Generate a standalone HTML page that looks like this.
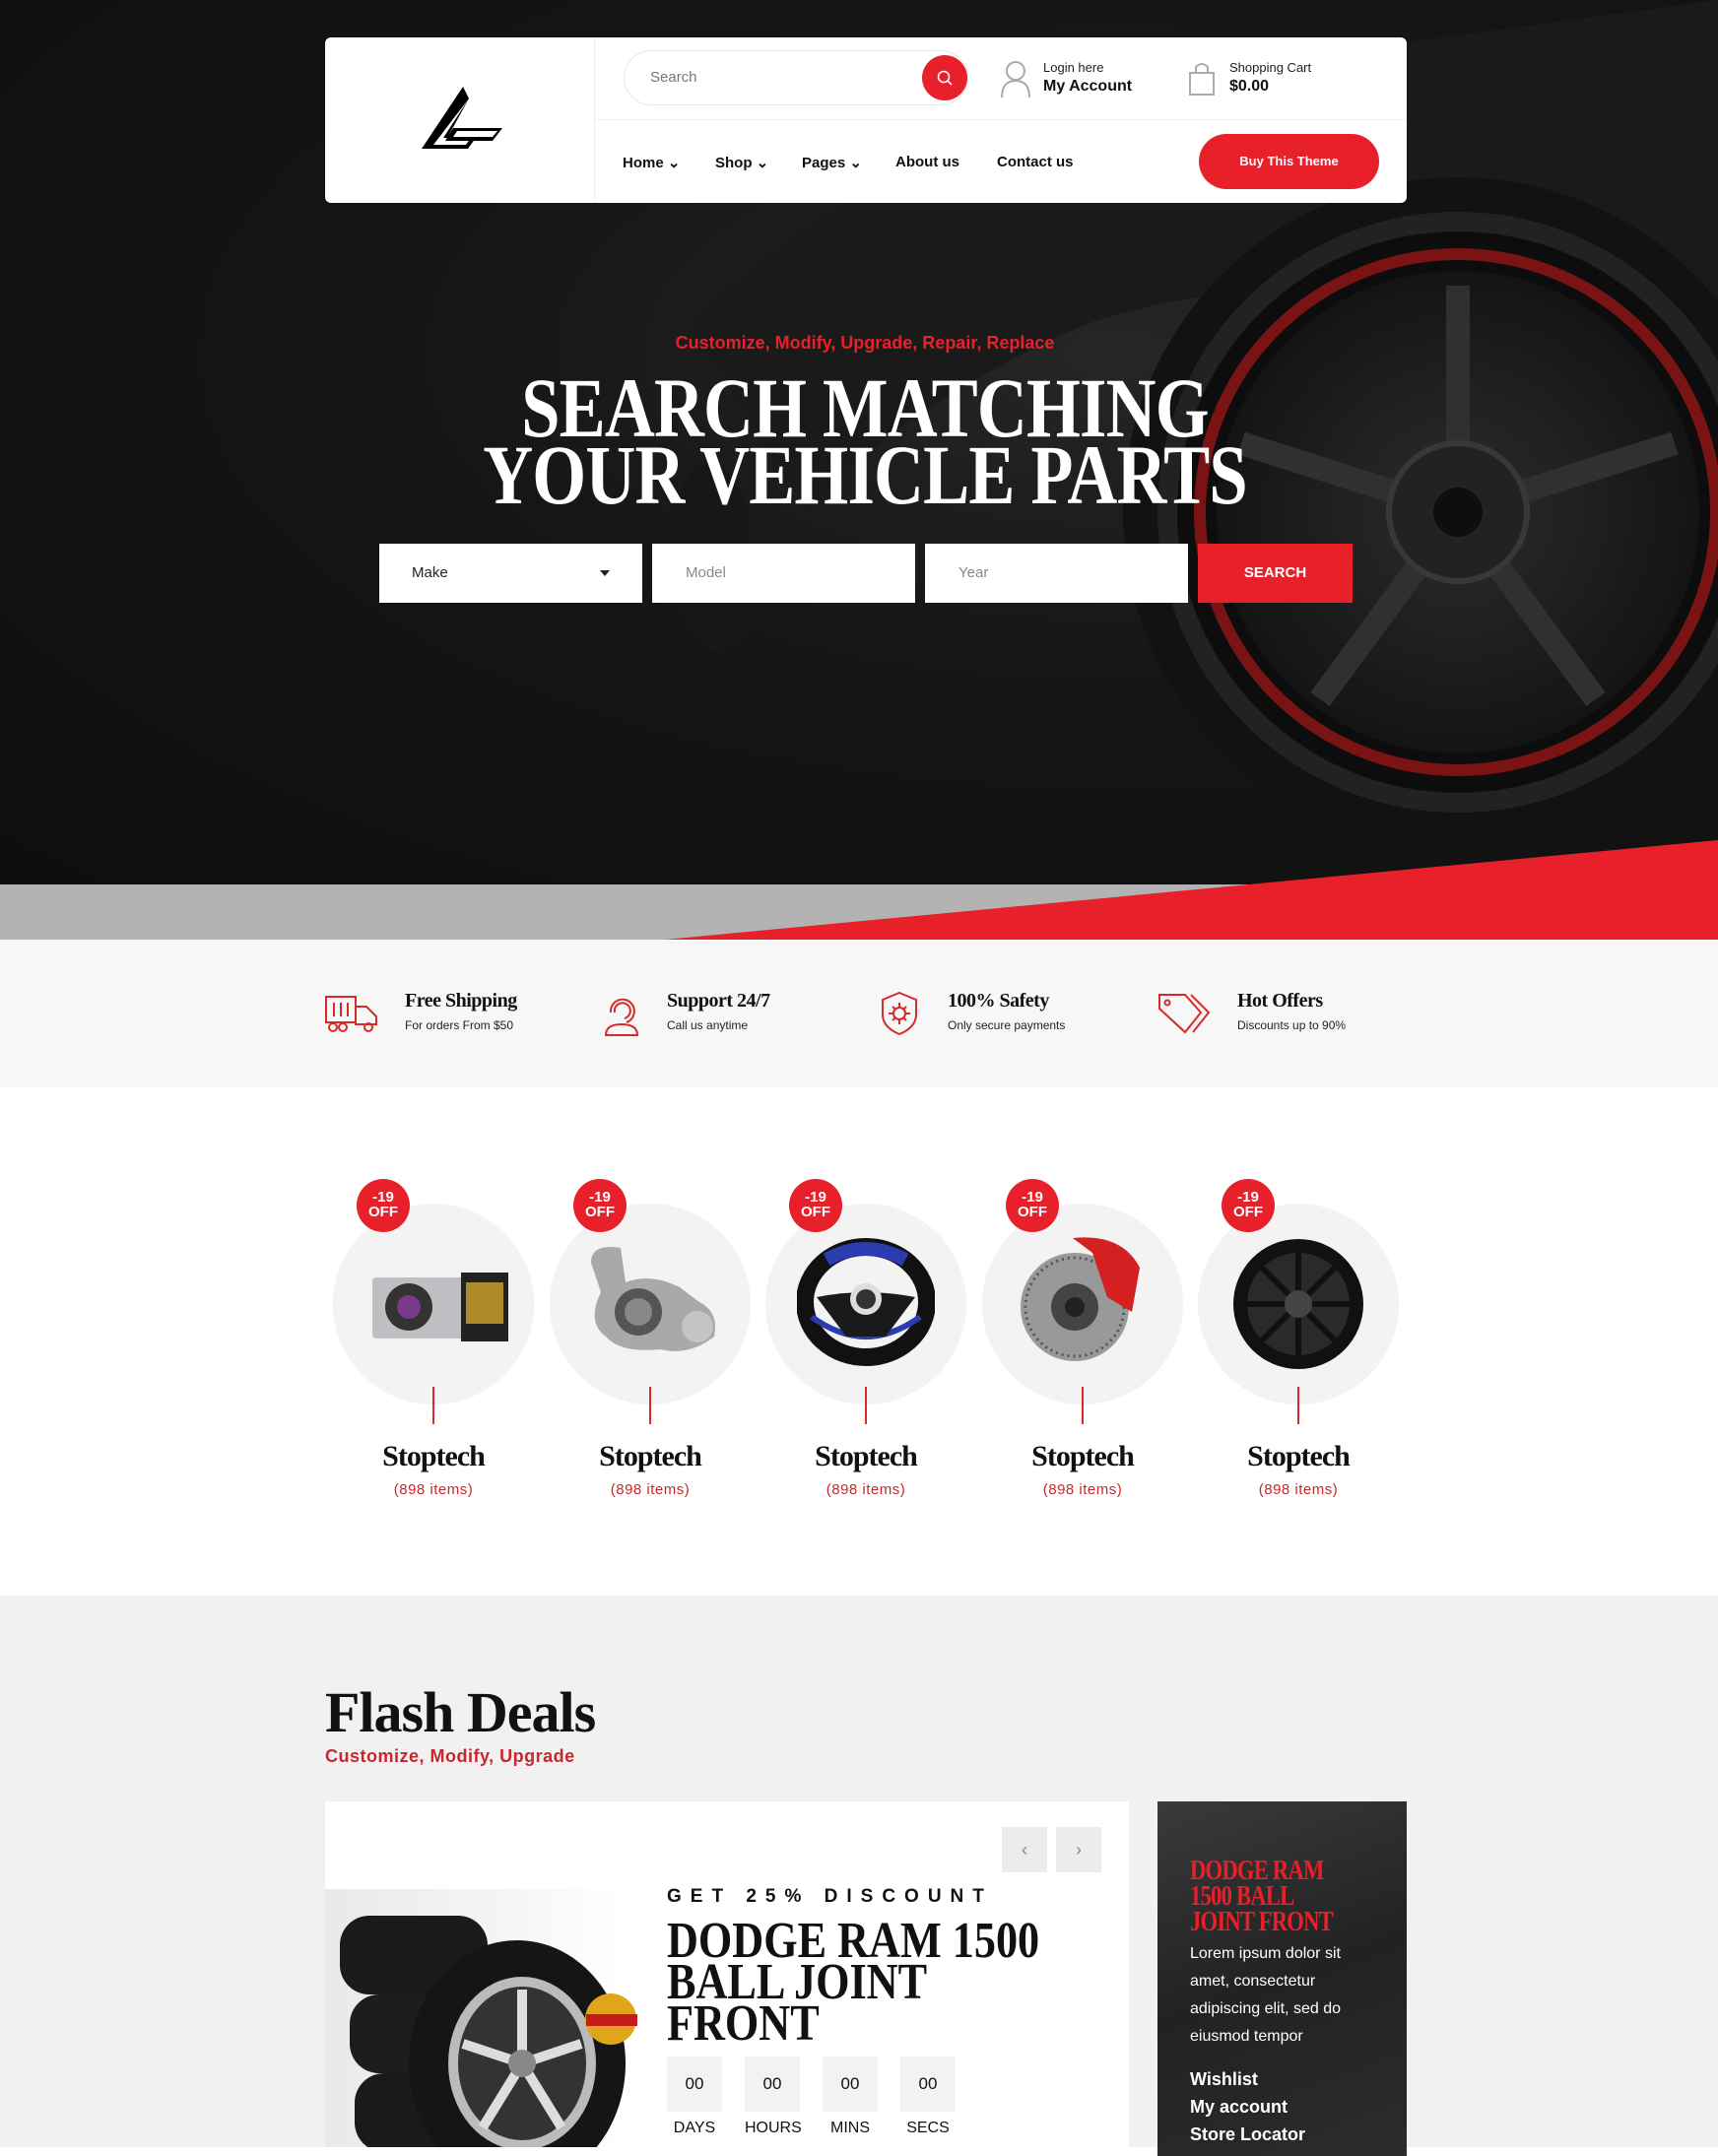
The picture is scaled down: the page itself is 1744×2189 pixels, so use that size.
<!DOCTYPE html>
<html><head><meta charset="utf-8">
<style>
*{margin:0;padding:0;box-sizing:border-box}
body{width:1744px;height:2180px;overflow:hidden;background:#fff;font-family:"Liberation Sans",sans-serif;position:relative}
.abs{position:absolute}
.serif{font-family:"Liberation Serif",serif;font-weight:bold}
#hero{left:0;top:0;width:1744px;height:898px;background:radial-gradient(ellipse at 65% 40%,#262626 0%,#151515 45%,#0e0e0e 100%);overflow:hidden}
.hdr{left:330px;top:38px;width:1098px;height:168px;background:#fff;border-radius:6px}
.nav a{position:absolute;top:118px;font-size:15px;font-weight:bold;color:#111}
.feat h4{font-family:"Liberation Serif",serif;font-weight:bold;font-size:20px;color:#111;letter-spacing:-0.5px}
.feat p{font-size:12px;color:#222;margin-top:6px}
.cat{position:absolute;top:1222px;width:210px;height:300px;text-align:center}
.circ{position:absolute;left:3px;top:0;width:204px;height:204px;border-radius:50%;background:#f3f3f3}
.badge{position:absolute;left:27px;top:-25px;width:54px;height:54px;border-radius:50%;background:#e8202a;color:#fff;font-size:15px;font-weight:bold;line-height:15px;padding-top:11px;text-align:center}
.cat .ln{position:absolute;left:104px;top:186px;width:2px;height:38px;background:#d62b2b}
.cat h3{position:absolute;left:0;top:240px;width:100%;font-family:"Liberation Serif",serif;font-weight:bold;font-size:30px;color:#111;letter-spacing:-1px}
.cat span{position:absolute;left:0;top:282px;width:100%;font-size:15px;color:#c8282d;letter-spacing:0.5px}
.cd{position:absolute;top:2088px;width:56px;height:56px;background:#f2f2f2;font-size:17px;text-align:center;line-height:56px;color:#111}
.cdl{position:absolute;top:2152px;width:56px;text-align:center;font-size:16px;color:#111}
</style></head><body>

<div id="hero" class="abs">
  <svg class="abs" style="left:0;top:0" width="1744" height="898">
    <defs><radialGradient id="g1" cx="50%" cy="50%" r="50%"><stop offset="0" stop-color="#2c2c2c"/><stop offset="1" stop-color="#141414"/></radialGradient></defs>
    <path d="M700 330 Q900 120 1300 60 L1744 0 L1744 300 Q1300 260 1100 330 Q900 420 820 520 Z" fill="#1a1a1a"/>
    <circle cx="1480" cy="520" r="340" fill="#121212"/>
    <circle cx="1480" cy="520" r="295" fill="#0d0d0d" stroke="#222" stroke-width="20"/>
    <circle cx="1480" cy="520" r="262" fill="none" stroke="#7a1414" stroke-width="12"/>
    <circle cx="1480" cy="520" r="245" fill="url(#g1)"/>
    <g stroke="#303030" stroke-width="24" fill="none">
      <line x1="1480" y1="520" x2="1480" y2="290"/>
      <line x1="1480" y1="520" x2="1700" y2="450"/>
      <line x1="1480" y1="520" x2="1620" y2="710"/>
      <line x1="1480" y1="520" x2="1340" y2="710"/>
      <line x1="1480" y1="520" x2="1260" y2="450"/>
    </g>
    <circle cx="1480" cy="520" r="70" fill="#222" stroke="#383838" stroke-width="6"/>
    <circle cx="1480" cy="520" r="25" fill="#0e0e0e"/>
    <path d="M680 520 Q720 420 760 520 L760 640 Q720 690 690 620 Z" fill="#171717"/>
  </svg>
</div>

<div class="abs hdr">
  <div class="abs" style="left:273px;top:0;width:1px;height:168px;background:#eee"></div>
  <div class="abs" style="left:274px;top:83px;width:824px;height:1px;background:#eee"></div>
  <svg class="abs" style="left:90px;top:50px" width="100" height="70" viewBox="0 0 100 70">
    <polygon points="50,0 8,63 55,63 63,52 34,52 56,12" fill="#000"/>
    <polygon points="56,12 30,52 58,52 53,59 20,59" fill="#fff"/>
    <polygon points="40,42 90,42 80,55 32,55" fill="#000"/>
    <polygon points="44,45 85,45 80,51 40,51" fill="#fff"/>
  </svg>
  <div class="abs" style="left:303px;top:13px;width:350px;height:56px;border:1px solid #e6e6e6;border-radius:28px"></div>
  <div class="abs" style="left:330px;top:32px;font-size:15px;color:#777">Search</div>
  <div class="abs" style="left:606px;top:18px;width:46px;height:46px;border-radius:50%;background:#e8202a"></div>
  <svg class="abs" style="left:620px;top:32px" width="18" height="18"><circle cx="8" cy="8" r="5.5" stroke="#fff" stroke-width="1.6" fill="none"/><line x1="12" y1="12" x2="16" y2="16" stroke="#fff" stroke-width="1.6"/></svg>
  <svg class="abs" style="left:685px;top:22px" width="32" height="40"><circle cx="16" cy="12" r="9" stroke="#aaa" stroke-width="2" fill="none"/><path d="M2 39 Q2 22 16 22 Q30 22 30 39" stroke="#aaa" stroke-width="2" fill="none"/></svg>
  <div class="abs" style="left:729px;top:23px;font-size:13px;color:#222">Login here</div>
  <div class="abs" style="left:729px;top:41px;font-size:16px;font-weight:bold;color:#111">My Account</div>
  <svg class="abs" style="left:876px;top:24px" width="30" height="36"><path d="M2 12 H26 V34 H2 Z" stroke="#aaa" stroke-width="2" fill="none"/><path d="M8 12 V6 Q14 0 20 6 V12" stroke="#aaa" stroke-width="2" fill="none"/></svg>
  <div class="abs" style="left:918px;top:23px;font-size:13px;color:#222">Shopping Cart</div>
  <div class="abs" style="left:918px;top:41px;font-size:16px;font-weight:bold;color:#111">$0.00</div>
  <div class="nav">
    <a style="left:302px">Home ⌄</a><a style="left:396px">Shop ⌄</a><a style="left:484px">Pages ⌄</a><a style="left:579px">About us</a><a style="left:682px">Contact us</a>
  </div>
  <div class="abs" style="left:887px;top:98px;width:183px;height:56px;border-radius:28px;background:#e8202a;color:#fff;font-size:13px;font-weight:bold;text-align:center;line-height:56px">Buy This Theme</div>
</div>

<div class="abs" style="left:0;top:338px;width:1756px;text-align:center;color:#e8202a;font-size:18px;font-weight:bold">Customize, Modify, Upgrade, Repair, Replace</div>
<div class="abs serif" style="left:0;top:380px;width:1756px;text-align:center;color:#fff;font-size:86px;line-height:68px;transform:scaleX(0.82);transform-origin:878px 0;letter-spacing:-1px">SEARCH MATCHING<br>YOUR VEHICLE PARTS</div>
<div class="abs" style="left:385px;top:552px;width:267px;height:60px;background:#fff"></div>
<div class="abs" style="left:418px;top:573px;font-size:15px;color:#222">Make</div>
<div class="abs" style="left:609px;top:579px;border:5px solid transparent;border-top:6px solid #222"></div>
<div class="abs" style="left:662px;top:552px;width:267px;height:60px;background:#fff"></div>
<div class="abs" style="left:696px;top:573px;font-size:15px;color:#888">Model</div>
<div class="abs" style="left:939px;top:552px;width:267px;height:60px;background:#fff"></div>
<div class="abs" style="left:973px;top:573px;font-size:15px;color:#888">Year</div>
<div class="abs" style="left:1216px;top:552px;width:157px;height:60px;background:#e8202a;color:#fff;font-size:15px;font-weight:bold;text-align:center;line-height:60px">SEARCH</div>

<div class="abs" style="left:0;top:898px;width:1744px;height:56px;background:#b3b3b3"></div>
<svg class="abs" style="left:0;top:850px" width="1744" height="105"><polygon points="675,104 1744,3 1744,104" fill="#e8202a"/></svg>

<div class="abs" style="left:0;top:954px;width:1744px;height:150px;background:#f7f7f7"></div>
<svg class="abs" style="left:330px;top:1010px" width="54" height="40" fill="none" stroke="#d62b2b" stroke-width="2"><rect x="1" y="2" width="30" height="26"/><path d="M9 8v14M16 8v14M23 8v14"/><path d="M31 12h11l10 10v8H31z"/><circle cx="8" cy="33" r="4"/><circle cx="18" cy="33" r="4"/><circle cx="44" cy="33" r="4"/></svg>
<div class="abs feat" style="left:411px;top:1005px"><h4>Free Shipping</h4><p>For orders From $50</p></div>
<svg class="abs" style="left:612px;top:1008px" width="38" height="44" fill="none" stroke="#d62b2b" stroke-width="2"><path d="M8 20 A12 12 0 1 1 24 30"/><path d="M12 20 A8 8 0 1 1 22 26"/><path d="M3 43 Q3 32 19 32 Q35 32 35 43 Z"/></svg>
<div class="abs feat" style="left:677px;top:1005px"><h4>Support 24/7</h4><p>Call us anytime</p></div>
<svg class="abs" style="left:893px;top:1006px" width="40" height="46" fill="none" stroke="#d62b2b" stroke-width="2"><path d="M20 2 L37 9 V24 Q37 37 20 44 Q3 37 3 24 V9 Z"/><circle cx="20" cy="23" r="6"/><path d="M20 12v5M20 29v5M9 23h5M26 23h5M13 16l3 3M24 27l3 3M27 16l-3 3M13 30l3-3"/></svg>
<div class="abs feat" style="left:962px;top:1005px"><h4>100% Safety</h4><p>Only secure payments</p></div>
<svg class="abs" style="left:1175px;top:1006px" width="56" height="44" fill="none" stroke="#d62b2b" stroke-width="2"><path d="M2 4 H28 L44 22 L28 42 L2 18 Z"/><path d="M34 4 L52 22 L36 42"/><circle cx="10" cy="12" r="2.5"/></svg>
<div class="abs feat" style="left:1256px;top:1005px"><h4>Hot Offers</h4><p>Discounts up to 90%</p></div>

<div class="cat" style="left:335px"><div class="circ"></div><div class="ln"></div>
 <svg class="abs" style="left:35px;top:55px" width="150" height="100"><rect x="8" y="20" width="95" height="62" rx="4" fill="#bfbfc3"/><circle cx="45" cy="50" r="24" fill="#333"/><circle cx="45" cy="50" r="12" fill="#7a3a8a"/><rect x="98" y="15" width="48" height="70" fill="#222"/><rect x="103" y="25" width="38" height="42" fill="#b08a2a"/></svg>
 <div class="badge">-19<br>OFF</div><h3>Stoptech</h3><span>(898 items)</span></div>
<div class="cat" style="left:555px"><div class="circ"></div><div class="ln"></div>
 <svg class="abs" style="left:35px;top:40px" width="150" height="120"><path d="M10 20 Q10 0 40 5 L45 40 Q70 30 100 45 L120 60 Q140 70 135 95 Q110 115 80 108 Q40 112 25 95 Q5 80 20 50 Z" fill="#a9a9a9"/><circle cx="58" cy="70" r="24" fill="#555"/><circle cx="58" cy="70" r="14" fill="#888"/><circle cx="118" cy="85" r="16" fill="#c4c4c4"/></svg>
 <div class="badge">-19<br>OFF</div><h3>Stoptech</h3><span>(898 items)</span></div>
<div class="cat" style="left:774px"><div class="circ"></div><div class="ln"></div>
 <svg class="abs" style="left:35px;top:35px" width="140" height="130"><ellipse cx="70" cy="65" rx="62" ry="56" fill="none" stroke="#111" stroke-width="18"/><path d="M30 22 Q70 0 110 22" stroke="#2b3bb0" stroke-width="14" fill="none"/><path d="M15 80 Q70 120 125 80" stroke="#2b3bb0" stroke-width="6" fill="none"/><path d="M20 60 Q70 50 120 60 L90 100 H50 Z" fill="#1a1a1a"/><circle cx="70" cy="62" r="16" fill="#ddd"/><circle cx="70" cy="62" r="10" fill="#333"/></svg>
 <div class="badge">-19<br>OFF</div><h3>Stoptech</h3><span>(898 items)</span></div>
<div class="cat" style="left:994px"><div class="circ"></div><div class="ln"></div>
 <svg class="abs" style="left:35px;top:25px" width="140" height="140"><circle cx="62" cy="80" r="55" fill="#999"/><circle cx="62" cy="80" r="50" fill="none" stroke="#555" stroke-width="3" stroke-dasharray="2 4"/><circle cx="62" cy="80" r="24" fill="#444"/><circle cx="62" cy="80" r="10" fill="#222"/><path d="M60 10 Q110 5 128 40 L120 85 L95 70 L80 25 Z" fill="#d42020"/></svg>
 <div class="badge">-19<br>OFF</div><h3>Stoptech</h3><span>(898 items)</span></div>
<div class="cat" style="left:1213px"><div class="circ"></div><div class="ln"></div>
 <svg class="abs" style="left:35px;top:30px" width="140" height="140"><circle cx="70" cy="72" r="66" fill="#111"/><circle cx="70" cy="72" r="52" fill="#2a2a2a"/><g stroke="#111" stroke-width="6"><line x1="70" y1="20" x2="70" y2="124"/><line x1="18" y1="72" x2="122" y2="72"/><line x1="33" y1="35" x2="107" y2="109"/><line x1="107" y1="35" x2="33" y2="109"/></g><circle cx="70" cy="72" r="14" fill="#444"/></svg>
 <div class="badge">-19<br>OFF</div><h3>Stoptech</h3><span>(898 items)</span></div>

<div class="abs" style="left:0;top:1620px;width:1744px;height:560px;background:#f1f1f1"></div>
<div class="abs serif" style="left:330px;top:1705px;font-size:58px;color:#111;letter-spacing:-1px">Flash Deals</div>
<div class="abs" style="left:330px;top:1773px;font-size:18px;font-weight:bold;color:#c8282d;letter-spacing:0.5px">Customize, Modify, Upgrade</div>
<div class="abs" style="left:330px;top:1829px;width:816px;height:360px;background:#fff"></div>
<div class="abs" style="left:1017px;top:1855px;width:46px;height:46px;background:#ececec;text-align:center;line-height:46px;color:#888;font-size:18px">‹</div>
<div class="abs" style="left:1072px;top:1855px;width:46px;height:46px;background:#ececec;text-align:center;line-height:46px;color:#888;font-size:18px">›</div>
<div class="abs" style="left:330px;top:1918px;width:300px;height:262px;background:linear-gradient(90deg,#e9e9e9,#f7f7f7 70%,#fff)"></div>
<svg class="abs" style="left:340px;top:1945px" width="320" height="235"><rect x="5" y="0" width="150" height="80" rx="30" fill="#1a1a1a"/><rect x="15" y="80" width="150" height="80" rx="30" fill="#1d1d1d"/><rect x="20" y="160" width="150" height="80" rx="30" fill="#1a1a1a"/><ellipse cx="185" cy="150" rx="110" ry="125" fill="#151515"/><ellipse cx="190" cy="150" rx="75" ry="88" fill="#bbb"/><ellipse cx="190" cy="150" rx="65" ry="78" fill="#333"/><g stroke="#ddd" stroke-width="10"><line x1="190" y1="150" x2="190" y2="75"/><line x1="190" y1="150" x2="250" y2="130"/><line x1="190" y1="150" x2="230" y2="215"/><line x1="190" y1="150" x2="150" y2="215"/><line x1="190" y1="150" x2="130" y2="130"/></g><circle cx="190" cy="150" r="14" fill="#888"/><circle cx="280" cy="105" r="26" fill="#e0a51a"/><rect x="255" y="100" width="52" height="12" fill="#c41c1c"/></svg>
<div class="abs" style="left:677px;top:1915px;font-size:19px;font-weight:bold;color:#111;letter-spacing:9px">GET 25% DISCOUNT</div>
<div class="abs serif" style="left:677px;top:1950px;font-size:52px;line-height:42px;color:#111;transform:scaleX(0.85);transform-origin:0 0;white-space:nowrap">DODGE RAM 1500<br>BALL JOINT<br>FRONT</div>
<div class="cd" style="left:677px">00</div><div class="cd" style="left:756px">00</div><div class="cd" style="left:835px">00</div><div class="cd" style="left:914px">00</div>
<div class="cdl" style="left:677px">DAYS</div><div class="cdl" style="left:756px">HOURS</div><div class="cdl" style="left:835px">MINS</div><div class="cdl" style="left:914px">SECS</div>
<div class="abs" style="left:1175px;top:1829px;width:253px;height:360px;background:linear-gradient(160deg,#3a3a3a,#222 50%,#2c2c2c)"></div>
<div class="abs serif" style="left:1208px;top:1886px;font-size:29px;line-height:26px;color:#e8202a;transform:scaleX(0.78);transform-origin:0 0;white-space:nowrap;letter-spacing:-1px">DODGE RAM<br>1500 BALL<br>JOINT FRONT</div>
<div class="abs" style="left:1208px;top:1970px;font-size:16px;line-height:28px;color:#fff;width:180px">Lorem ipsum dolor sit amet, consectetur adipiscing elit, sed do eiusmod tempor</div>
<div class="abs" style="left:1208px;top:2097px;font-size:18px;line-height:28px;color:#fff;font-weight:bold">Wishlist<br>My account<br>Store Locator</div>
</body></html>
